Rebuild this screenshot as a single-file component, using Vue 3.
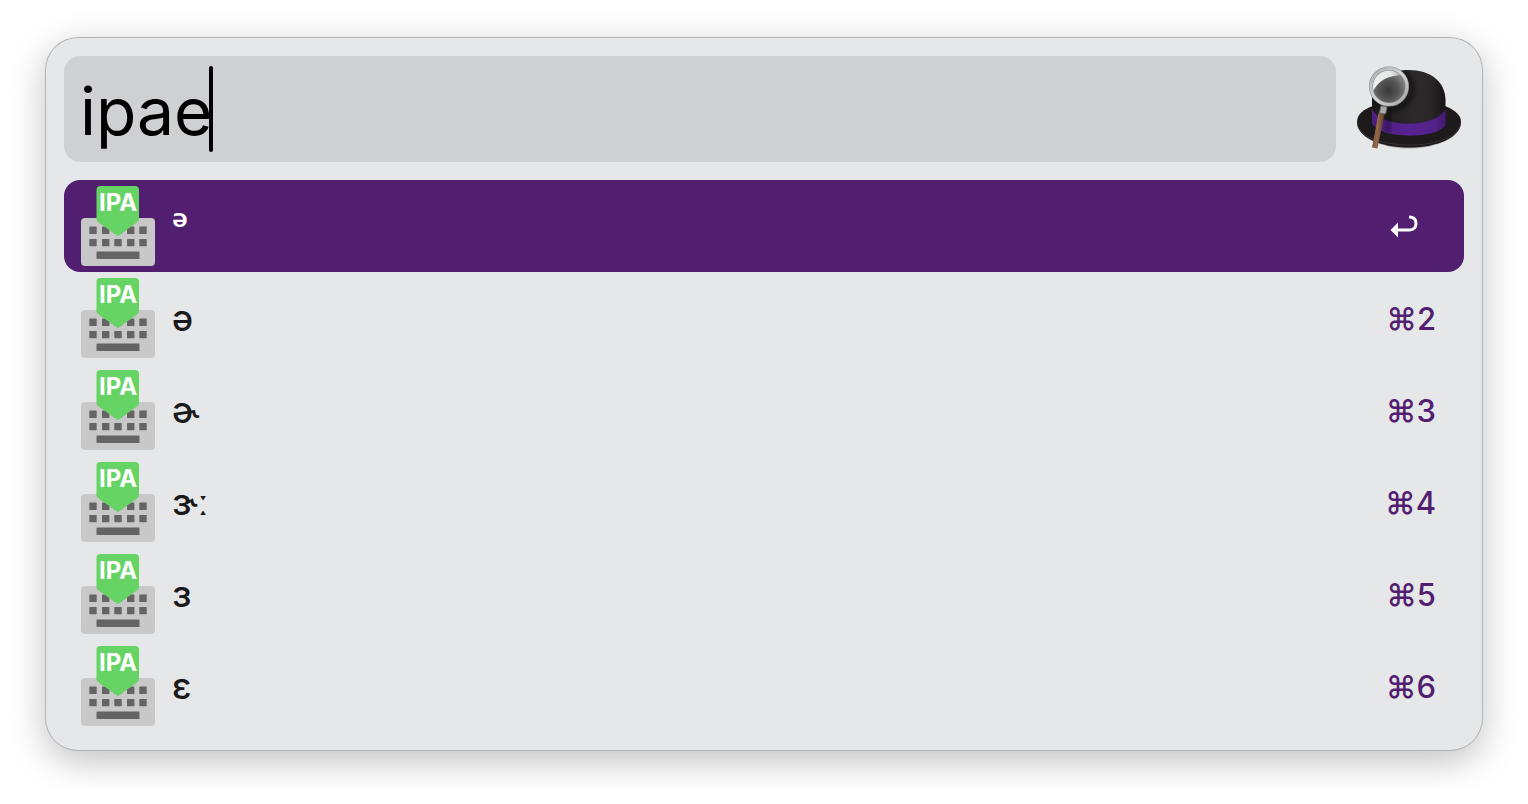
<script setup>
import { ref } from 'vue';

const query = ref('ipae');
const selected = ref(0);

const results = ref([
  { symbol: 'ᵊ', shortcut: '', raised: true },
  { symbol: 'ə', shortcut: '⌘2' },
  { symbol: 'ɚ', shortcut: '⌘3' },
  { symbol: 'ɝː', shortcut: '⌘4' },
  { symbol: 'ɜ', shortcut: '⌘5' },
  { symbol: 'ɛ', shortcut: '⌘6' },
]);

const keyColumns = [9.3, 22, 34.3, 47, 59.3];

function select(index) {
  selected.value = index;
}
</script>

<template>
  <main class="launcher">
    <div class="search-bar">
      <label class="search-field">
        <input v-model="query" class="search-input" type="text" aria-label="Search" spellcheck="false">
        <span class="caret"></span>
      </label>
      <svg class="hat" viewBox="14 6 110 106" aria-hidden="true">
        <defs>
          <linearGradient id="crown" x1="0" y1="0" x2="1" y2="0">
            <stop offset="0" stop-color="#1b191a" />
            <stop offset="0.55" stop-color="#2b292a" />
            <stop offset="0.8" stop-color="#292728" />
            <stop offset="1" stop-color="#151314" />
          </linearGradient>
          <linearGradient id="band" x1="0" y1="0" x2="1" y2="0">
            <stop offset="0" stop-color="#4e1d80" />
            <stop offset="0.5" stop-color="#572391" />
            <stop offset="0.85" stop-color="#54208a" />
            <stop offset="1" stop-color="#451970" />
          </linearGradient>
          <radialGradient id="lens" cx="0.48" cy="0.6" r="0.55">
            <stop offset="0" stop-color="#3a3a3a" />
            <stop offset="0.5" stop-color="#555" />
            <stop offset="1" stop-color="#8a8a8a" />
          </radialGradient>
          <linearGradient id="shine" x1="0" y1="0.4" x2="1" y2="0">
            <stop offset="0" stop-color="#eeefef" />
            <stop offset="0.6" stop-color="#e4e5e6" />
            <stop offset="1" stop-color="#9a9b9c" />
          </linearGradient>
          <linearGradient id="rim" x1="0" y1="0" x2="1" y2="1">
            <stop offset="0" stop-color="#a9aaab" />
            <stop offset="0.5" stop-color="#d6d7d8" />
            <stop offset="1" stop-color="#a2a3a4" />
          </linearGradient>
          <linearGradient id="handle" x1="0" y1="0" x2="1" y2="0.2">
            <stop offset="0" stop-color="#6c4a31" />
            <stop offset="0.5" stop-color="#94694a" />
            <stop offset="1" stop-color="#5b3a25" />
          </linearGradient>
          <filter id="soft" x="-30%" y="-30%" width="160%" height="160%">
            <feGaussianBlur stdDeviation="2" />
          </filter>
          <clipPath id="hat-shape">
            <path d="M32 72 V48 C33 30 49 20 69 20 C90 20 105 31 105.500 50 V72 C98 89 41 89 32 72 Z" />
          </clipPath>
        </defs>
        <ellipse cx="69" cy="74" rx="51" ry="24.500" fill="#777" opacity="0.5" />
        <path d="M17 72 C17 64 24 59 33 56 L105 56 C115 60 121 65 121 72 C121 87 98 97.500 69 97.500 C40 97.500 17 87 17 72 Z" fill="#1c1a1b" />
        <path d="M18 76 C22 88 44 95 69 95 C94 95 116 88 120 76" fill="none" stroke="#333132" stroke-width="1" />
        <path d="M32 72 V48 C33 30 49 20 69 20 C90 20 105 31 105.500 50 V72 C98 89 41 89 32 72 Z" fill="url(#crown)" />
        <path d="M32 58 C39 79 98 79 105.500 58 V75 C98 89.500 39 89.500 32 73 Z" fill="url(#band)" />
        <g clip-path="url(#hat-shape)">
          <circle cx="53" cy="39" r="19" fill="none" stroke="#000" stroke-width="5" opacity="0.5" filter="url(#soft)" />
          <path d="M50 60 L45 94" stroke="#000" stroke-width="7" opacity="0.3" filter="url(#soft)" />
        </g>
        <circle cx="49" cy="36.500" r="18" fill="url(#lens)" />
        <path d="M32.500 43 C31 30 37 20 49 19 C55 19 60 21 63 25 C48 25 37 31 32.500 43 Z" fill="url(#shine)" />
        <circle cx="49" cy="36.500" r="18" fill="none" stroke="#858687" stroke-width="4" />
        <circle cx="49" cy="36.500" r="18" fill="none" stroke="url(#rim)" stroke-width="3" />
        <path d="M41 56 L47 57 L45.500 64 L39.500 63 Z" fill="#a8a9aa" stroke="#717273" stroke-width="1" />
        <path d="M38.500 63 L44.500 64 L37.500 98.500 L32 97.500 Z" fill="url(#handle)" />
      </svg>
    </div>

    <ul class="results">
      <li v-for="(result, index) in results" :key="result.symbol">
        <button
          type="button"
          class="result"
          :class="{ active: index === selected }"
          @click="select(index)"
        >
          <svg class="icon" viewBox="0 0 76 80" aria-hidden="true">
            <rect x="1" y="32" width="74" height="48" rx="4" fill="#c8c8c8" />
            <g fill="#646464">
              <rect v-for="x in keyColumns" :key="'a' + x" :x="x" y="40.600" width="7.400" height="7.300" rx="0.500" />
              <rect v-for="x in keyColumns" :key="'b' + x" :x="x" y="53" width="7.400" height="7.300" rx="0.500" />
              <rect x="16.500" y="65.400" width="43" height="7.600" rx="0.500" />
            </g>
            <path d="M20.500 0 H55 Q59 0 59 4 V33 Q59 35 57.500 36 L38 50.300 L18 36 Q16.500 35 16.500 33 V4 Q16.500 0 20.500 0 Z" fill="#66d465" />
            <text class="icon-text" x="38" y="25" text-anchor="middle">IPA</text>
          </svg>
          <span class="symbol" :class="{ raised: result.raised }">{{ result.symbol }}</span>
          <span v-if="result.shortcut" class="shortcut">{{ result.shortcut }}</span>
          <svg v-else class="return" viewBox="0 0 28 24" role="img" aria-label="Return">
            <path d="M7 16 H19.500 C24 16 26 13 26 9.500 C26 5.500 23.500 3 19 3" fill="none" stroke="#fff" stroke-width="3" />
            <path d="M0.500 16 L8 8.500 V23.500 Z" fill="#fff" />
          </svg>
        </button>
      </li>
    </ul>
  </main>
</template>

<style>
body {
  margin: 0;
  background: #fff;
}
</style>

<style scoped>
.launcher {
  box-sizing: border-box;
  margin: 38px 46px;
  padding: 18px;
  border-radius: 32px;
  background: #e6e7e8;
  box-shadow: 0 0 0 1px #b4b4b5, 0 10px 36px rgba(0, 0, 0, 0.26);
  font-family: Inter, "Noto Sans", sans-serif;
}

.search-bar {
  display: flex;
  gap: 18px;
  margin-bottom: 18px;
}

.search-field {
  display: flex;
  flex: 1;
  align-items: center;
  height: 106px;
  padding: 0 16px;
  box-sizing: border-box;
  border-radius: 16px;
  background: #cfd0d1;
  cursor: text;
}

.search-input {
  field-sizing: content;
  padding: 4px 0 0;
  border: 0;
  outline: 0;
  background: transparent;
  color: #000;
  caret-color: transparent;
  font-family: inherit;
  font-size: 66px;
  font-weight: 400;
}

.caret {
  width: 4px;
  height: 86px;
  margin-left: -4px;
  border-radius: 2px;
  background: #000;
}

.hat {
  width: 110px;
  height: 106px;
}

.results {
  margin: 0;
  padding: 0;
  list-style: none;
}

.result {
  display: flex;
  align-items: center;
  box-sizing: border-box;
  width: 100%;
  height: 92px;
  padding: 0 28px 0 16px;
  border: 0;
  border-radius: 16px;
  background: transparent;
  color: #1a1a1a;
  font-family: inherit;
  text-align: left;
  cursor: pointer;
}

.result.active {
  background: #521e70;
  color: #fff;
}

.icon {
  width: 76px;
  height: 80px;
  margin-right: 16px;
}

.icon-text {
  fill: #fff;
  font-size: 24px;
  font-weight: 700;
}

.symbol {
  flex: 1;
  font-size: 36px;
  font-weight: 500;
}

.symbol.raised {
  padding-bottom: 8px;
  font-size: 42px;
  font-weight: 600;
}

.shortcut {
  color: #521e70;
  font-size: 31px;
  font-weight: 500;
}

.return {
  width: 28px;
  height: 24px;
  margin-right: 18px;
}
</style>
